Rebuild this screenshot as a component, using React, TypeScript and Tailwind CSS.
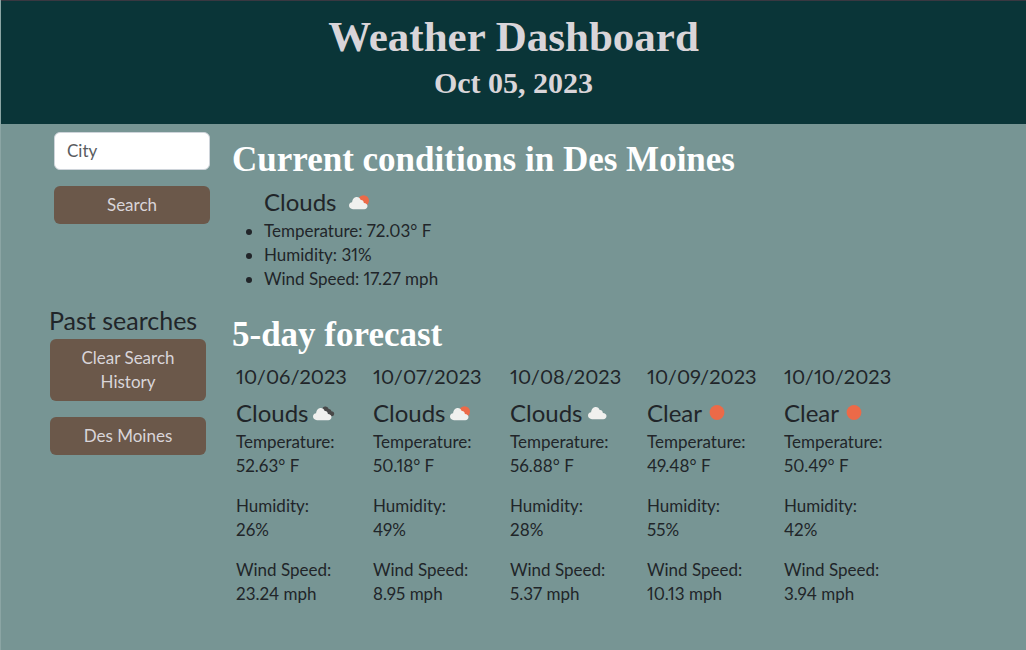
type Sky = "sun" | "partly" | "cloud" | "overcast";

const CLOUD =
  "M4 15.200C1.700 15.200 0 13.700 0 11.600C0 9.800 1.300 8.500 3.100 8.300C3.300 5.200 5.300 3 7.800 3C9.700 3 11 4 11.700 5.900C13.500 5.700 14.700 6.800 14.900 8.900C17 8.900 18.500 10.200 18.500 12C18.500 13.900 17.200 15.200 15.200 15.200Z";

function SkyIcon({ sky }: { sky: Sky }) {
  return (
    <svg viewBox="0 0 22 16" className="h-4 w-[22px] shrink-0" aria-hidden="true">
      {sky === "sun" && <circle cx="11" cy="7.500" r="7.400" fill="#ec6a48" />}
      {sky === "partly" && <circle cx="14.600" cy="6.600" r="5.400" fill="#ec6a48" />}
      {sky === "overcast" && (
        <path
          d="M9 4.500C9.500 2.200 11.400 0.900 13.300 1.800C14.500 2.100 15.300 2.800 15.700 4C17.300 3.900 18.300 4.900 18.400 6.300C20.200 6.300 21.200 7.300 21.200 8.700C21.200 10.400 20 11.200 18 11.200Z"
          fill="#484848"
        />
      )}
      {sky !== "sun" && (
        <path d={CLOUD} fill="#f0f0ee" transform={sky === "cloud" ? "translate(1 -1)" : undefined} />
      )}
    </svg>
  );
}

const forecast: { date: string; label: string; sky: Sky; temp: string; humidity: string; wind: string }[] = [
  { date: "10/06/2023", label: "Clouds", sky: "overcast", temp: "52.63", humidity: "26", wind: "23.24" },
  { date: "10/07/2023", label: "Clouds", sky: "partly", temp: "50.18", humidity: "49", wind: "8.95" },
  { date: "10/08/2023", label: "Clouds", sky: "cloud", temp: "56.88", humidity: "28", wind: "5.37" },
  { date: "10/09/2023", label: "Clear", sky: "sun", temp: "49.48", humidity: "55", wind: "10.13" },
  { date: "10/10/2023", label: "Clear", sky: "sun", temp: "50.49", humidity: "42", wind: "3.94" },
];

const buttonStyle =
  "w-full cursor-pointer rounded-md bg-[#6b584a] px-3 py-[7px] text-center text-[17px] leading-6 text-[#d9d5d9]";
const headingStyle = "font-['Liberation_Serif',serif] text-[35px] leading-10 font-bold text-white";

export default function App() {
  return (
    <div className="min-h-screen border-l border-[#8ba5a4] bg-[#779594] font-[Lato,sans-serif] text-[17px] leading-6 text-[#212529] proportional-nums">
      <header className="border-t border-[#393841] bg-[#0a3538] pt-3 pb-6 text-center font-['Liberation_Serif',serif] font-bold text-[#d9d5d9]">
        <h1 className="text-[43px] leading-[48px]">Weather Dashboard</h1>
        <h2 className="mt-1 text-[30px] leading-[35px]">Oct 05, 2023</h2>
      </header>

      <div className="flex">
        <aside className="w-[231px] shrink-0 pt-2">
          <form className="ml-[53px] flex w-[156px] flex-col gap-4" onSubmit={(e) => e.preventDefault()}>
            <input
              type="text"
              aria-label="City"
              placeholder="City"
              className="w-full rounded-md border border-[#ced4da] bg-white px-3 py-1.5 placeholder:text-[#595c5f]"
            />
            <button type="submit" className={buttonStyle}>Search</button>
          </form>
          <section className="mt-[82px] ml-12">
            <h3 className="text-[25px] leading-[29px]">Past searches</h3>
            <div className="mt-1 ml-px flex w-[156px] flex-col gap-4">
              <button type="button" className={buttonStyle}>Clear Search History</button>
              <button type="button" className={buttonStyle}>Des Moines</button>
            </div>
          </section>
        </aside>

        <main className="min-w-0 flex-1 pt-4">
          <section>
            <h2 className={headingStyle}>Current conditions in Des Moines</h2>
            <div className="mt-[5px] pl-8">
              <div className="flex items-center gap-3">
                <h3 className="text-[24px] leading-[34px]">Clouds</h3>
                <SkyIcon sky="partly" />
              </div>
              <ul className="list-disc">
                <li>Temperature: 72.03° F</li>
                <li>Humidity: 31%</li>
                <li>Wind Speed: 17.27 mph</li>
              </ul>
            </div>
          </section>

          <section className="mt-6">
            <h2 className={headingStyle}>5-day forecast</h2>
            <div className="mt-[7px] ml-1 flex flex-wrap">
              {forecast.map((day) => (
                <article key={day.date} className="w-[137px]">
                  <h4 className="text-[20px] leading-7">{day.date}</h4>
                  <div className="mt-1.5 flex items-center gap-1">
                    <h3 className="text-[24px] leading-[34px]">{day.label}</h3>
                    <SkyIcon sky={day.sky} />
                  </div>
                  <div className="flex flex-col gap-4">
                    <p>Temperature:<br />{day.temp}° F</p>
                    <p>Humidity:<br />{day.humidity}%</p>
                    <p>Wind Speed:<br />{day.wind} mph</p>
                  </div>
                </article>
              ))}
            </div>
          </section>
        </main>
      </div>
    </div>
  );
}
